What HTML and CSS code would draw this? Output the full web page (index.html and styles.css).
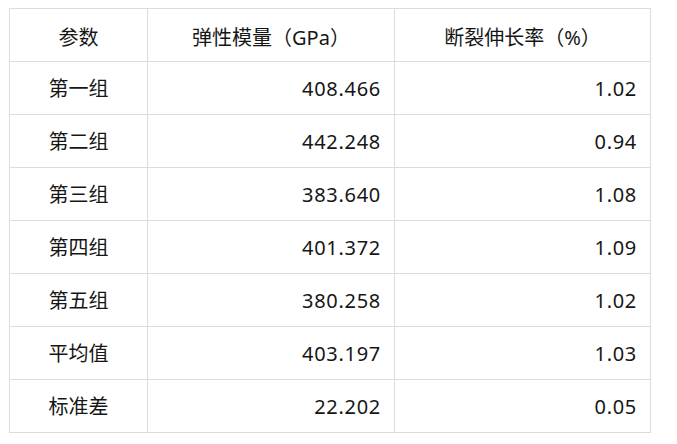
FILE: index.html
```html
<!DOCTYPE html>
<html lang="zh">
<head>
<meta charset="utf-8">
<link rel="stylesheet" href="styles.css">
</head>
<body>
<table class="data">
  <colgroup>
    <col class="c1"><col class="c2"><col class="c3">
  </colgroup>
  <thead>
    <tr><th>参数</th><th>弹性模量（GPa）</th><th>断裂伸长率（%）</th></tr>
  </thead>
  <tbody>
    <tr><td class="name">第一组</td><td class="num">408.466</td><td class="num">1.02</td></tr>
    <tr><td class="name">第二组</td><td class="num">442.248</td><td class="num">0.94</td></tr>
    <tr><td class="name">第三组</td><td class="num">383.640</td><td class="num">1.08</td></tr>
    <tr><td class="name">第四组</td><td class="num">401.372</td><td class="num">1.09</td></tr>
    <tr><td class="name">第五组</td><td class="num">380.258</td><td class="num">1.02</td></tr>
    <tr><td class="name">平均值</td><td class="num">403.197</td><td class="num">1.03</td></tr>
    <tr><td class="name">标准差</td><td class="num">22.202</td><td class="num">0.05</td></tr>
  </tbody>
</table>
</body>
</html>
```

FILE: styles.css
```css
html, body {
  margin: 0;
  padding: 0;
  background: #ffffff;
}
body {
  padding: 8px 0 0 9px;
  font-family: "Noto Sans", "Noto Sans CJK SC", sans-serif;
  color: #161616;
  font-size: 20px;
}
.data {
  border-collapse: collapse;
  table-layout: fixed;
  width: 641px;
}
.c1 { width: 138px; }
.c2 { width: 247px; }
.c3 { width: 256px; }
.data th, .data td {
  border: 1px solid #dcdcdc;
  height: 53px;
  padding: 2px 14px 0;
  font-weight: normal;
  line-height: 24px;
  box-sizing: border-box;
}
.data th {
  text-align: center;
  padding-top: 5px;
}
.data td.name { text-align: center; }
.data td.num {
  text-align: right;
  letter-spacing: 0.7px;
  padding-right: 13px;
}
```
